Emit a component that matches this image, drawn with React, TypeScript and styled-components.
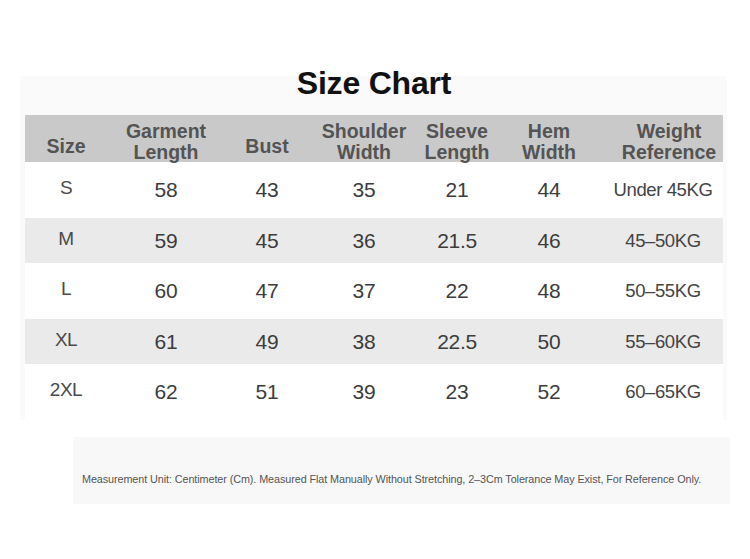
import React from "react";
import styled, { createGlobalStyle } from "styled-components";

const Global = createGlobalStyle`
  html, body { margin: 0; padding: 0; background: #ffffff; }
  body { font-family: "Liberation Sans", Arial, sans-serif; }
`;

const Page = styled.div`
  width: 750px;
  height: 559px;
  overflow: hidden;
  background: #ffffff;
  padding-top: 76px;
  box-sizing: border-box;
`;

const Panel = styled.section`
  margin-left: 20px;
  width: 707px;
  background: #fafafa;
  padding: 0 4px 0 5px;
  box-sizing: border-box;
`;

const Title = styled.h1`
  margin: 0;
  height: 39px;
  padding-top: 0;
  box-sizing: border-box;
  text-align: center;
  font-size: 32px;
  line-height: 14px;
  font-weight: 700;
  color: #111111;
  letter-spacing: -0.2px;
`;

const cols = "82px 118px 84px 110px 76px 108px 120px";

const HeaderRow = styled.div`
  display: grid;
  grid-template-columns: ${cols};
  height: 47px;
  background: #c9c9c9;
  align-items: center;
  padding-top: 6px;
  box-sizing: border-box;
`;

const HeadCell = styled.div<{ $low?: boolean; $shift?: number }>`
  text-align: center;
  font-size: 19.5px;
  line-height: 21px;
  font-weight: 700;
  color: #545454;
  padding-top: ${(p) => (p.$low ? 9 : 0)}px;
  padding-left: ${(p) => (p.$shift ?? 0) * 2}px;
  white-space: nowrap;
`;

const Row = styled.div<{ $shade: boolean }>`
  display: grid;
  grid-template-columns: ${cols};
  height: ${(p) => (p.$shade ? 45 : 56)}px;
  background: ${(p) => (p.$shade ? "#eaeaea" : "#ffffff")};
  align-items: center;
`;

const SizeCell = styled.div`
  text-align: center;
  font-size: 19px;
  color: #4a4a4a;
  padding-bottom: 4px;
  letter-spacing: -0.5px;
`;

const NumCell = styled.div`
  text-align: center;
  font-size: 21px;
  color: #3c3c3c;
  letter-spacing: -0.3px;
`;

const WeightCell = styled.div`
  text-align: center;
  font-size: 18.5px;
  color: #444444;
  letter-spacing: -0.4px;
  white-space: nowrap;
`;

const Footer = styled.footer`
  margin: 17px 0 0 73px;
  width: 657px;
  height: 67px;
  background: #f8f8f8;
  padding: 36px 0 0 9px;
  box-sizing: border-box;
`;

const Note = styled.p`
  margin: 0;
  font-size: 10.8px;
  line-height: 12px;
  color: #555555;
  letter-spacing: -0.08px;
  white-space: nowrap;
`;

type RowData = {
  size: string;
  values: string[];
  weight: string;
};

const rows: RowData[] = [
  { size: "S", values: ["58", "43", "35", "21", "44"], weight: "Under 45KG" },
  { size: "M", values: ["59", "45", "36", "21.5", "46"], weight: "45–50KG" },
  { size: "L", values: ["60", "47", "37", "22", "48"], weight: "50–55KG" },
  { size: "XL", values: ["61", "49", "38", "22.5", "50"], weight: "55–60KG" },
  { size: "2XL", values: ["62", "51", "39", "23", "52"], weight: "60–65KG" },
];

export default function App() {
  return (
    <Page>
      <Global />
      <Panel>
        <Title>Size Chart</Title>
        <HeaderRow>
          <HeadCell $low>Size</HeadCell>
          <HeadCell>
            Garment
            <br />
            Length
          </HeadCell>
          <HeadCell $low>Bust</HeadCell>
          <HeadCell>
            Shoulder
            <br />
            Width
          </HeadCell>
          <HeadCell>
            Sleeve
            <br />
            Length
          </HeadCell>
          <HeadCell>
            Hem
            <br />
            Width
          </HeadCell>
          <HeadCell $shift={6}>
            Weight
            <br />
            Reference
          </HeadCell>
        </HeaderRow>
        {rows.map((r, i) => (
          <Row key={r.size} $shade={i % 2 === 1}>
            <SizeCell>{r.size}</SizeCell>
            {r.values.map((v, j) => (
              <NumCell key={j}>{v}</NumCell>
            ))}
            <WeightCell>{r.weight}</WeightCell>
          </Row>
        ))}
      </Panel>
      <Footer>
        <Note>
          Measurement Unit: Centimeter (Cm). Measured Flat Manually Without Stretching, 2–3Cm Tolerance May Exist, For Reference Only.
        </Note>
      </Footer>
    </Page>
  );
}
